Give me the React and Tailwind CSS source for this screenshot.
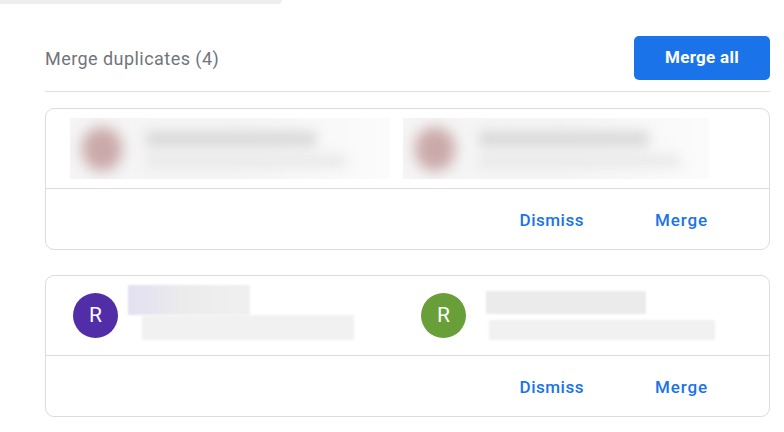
import React from 'react';

const font = { fontFamily: 'Roboto, "Open Sans", sans-serif' };

function BlurredPerson() {
  return (
    <div className="flex items-center h-full bg-gradient-to-r from-[#f5f5f5] via-[#f5f5f5] to-[#fbfbfb] overflow-hidden">
      <div className="ml-3 w-[40px] h-[44px] rounded-full bg-[#caa9a9] blur-[7px] shrink-0" />
      <div className="ml-6 flex flex-col gap-2 blur-[6px]">
        <div className="w-[170px] h-[16px] bg-[#dadada]" />
        <div className="w-[200px] h-[12px] bg-[#e8e8e8]" />
      </div>
    </div>
  );
}

function Actions() {
  return (
    <div className="h-[60px] pt-[3px] flex items-center justify-end pr-[61px] gap-[71px] text-[#1a73e8] text-[17px] font-medium tracking-[0.5px]">
      <button>Dismiss</button>
      <button className="tracking-[0.9px]">Merge</button>
    </div>
  );
}

function Avatar({ color }) {
  return (
    <div className={`w-[45px] h-[45px] rounded-full flex items-center justify-center text-white text-[21px] shrink-0 ${color}`}>
      R
    </div>
  );
}

export default function App() {
  return (
    <div className="w-[784px] h-[432px] bg-white relative overflow-hidden" style={font}>
      <div className="absolute left-0 top-0 w-[282px] h-[4px] bg-[#eeeeee] rounded-br-md" />
      <div className="pl-[45px] w-[770px]">
        <div className="flex items-center justify-between pt-[36px] pb-[11px] border-b border-[#e0e0e0]">
          <h2 className="text-[18px] tracking-[0.45px] text-[#70757a]">Merge duplicates (4)</h2>
          <button className="w-[136px] h-[44px] rounded-[5px] bg-[#1a73e8] text-white text-[17px] font-bold tracking-[0.3px]">
            Merge all
          </button>
        </div>

        <div className="mt-[16px] border border-[#dadce0] rounded-[9px]">
          <div className="h-[80px] border-b border-[#dadce0] flex items-center">
            <div className="ml-[24px] w-[320px] h-[61px]">
              <BlurredPerson />
            </div>
            <div className="ml-[13px] w-[306px] h-[61px]">
              <BlurredPerson />
            </div>
          </div>
          <Actions />
        </div>

        <div className="mt-[25px] border border-[#dadce0] rounded-[9px]">
          <div className="h-[80px] border-b border-[#dadce0] flex items-center">
            <div className="ml-[27px] w-[348px] flex items-center">
              <Avatar color="bg-[#512da8]" />
              <div className="ml-[10px] flex flex-col -mt-[6px]">
                <div className="w-[122px] h-[30px] bg-gradient-to-r from-[#e4e0f2] via-[#ececec] to-[#f0f0f0] blur-[1px]" />
                <div className="ml-[14px] w-[212px] h-[25px] bg-[#f1f1f1] blur-[1px]" />
              </div>
            </div>
            <div className="flex items-center">
              <Avatar color="bg-[#689f38]" />
              <div className="ml-[20px] flex flex-col">
                <div className="w-[160px] h-[23px] bg-[#ebebeb] blur-[1px]" />
                <div className="mt-[6px] ml-[3px] w-[226px] h-[20px] bg-[#f1f1f1] blur-[1px]" />
              </div>
            </div>
          </div>
          <Actions />
        </div>
      </div>
    </div>
  );
}
